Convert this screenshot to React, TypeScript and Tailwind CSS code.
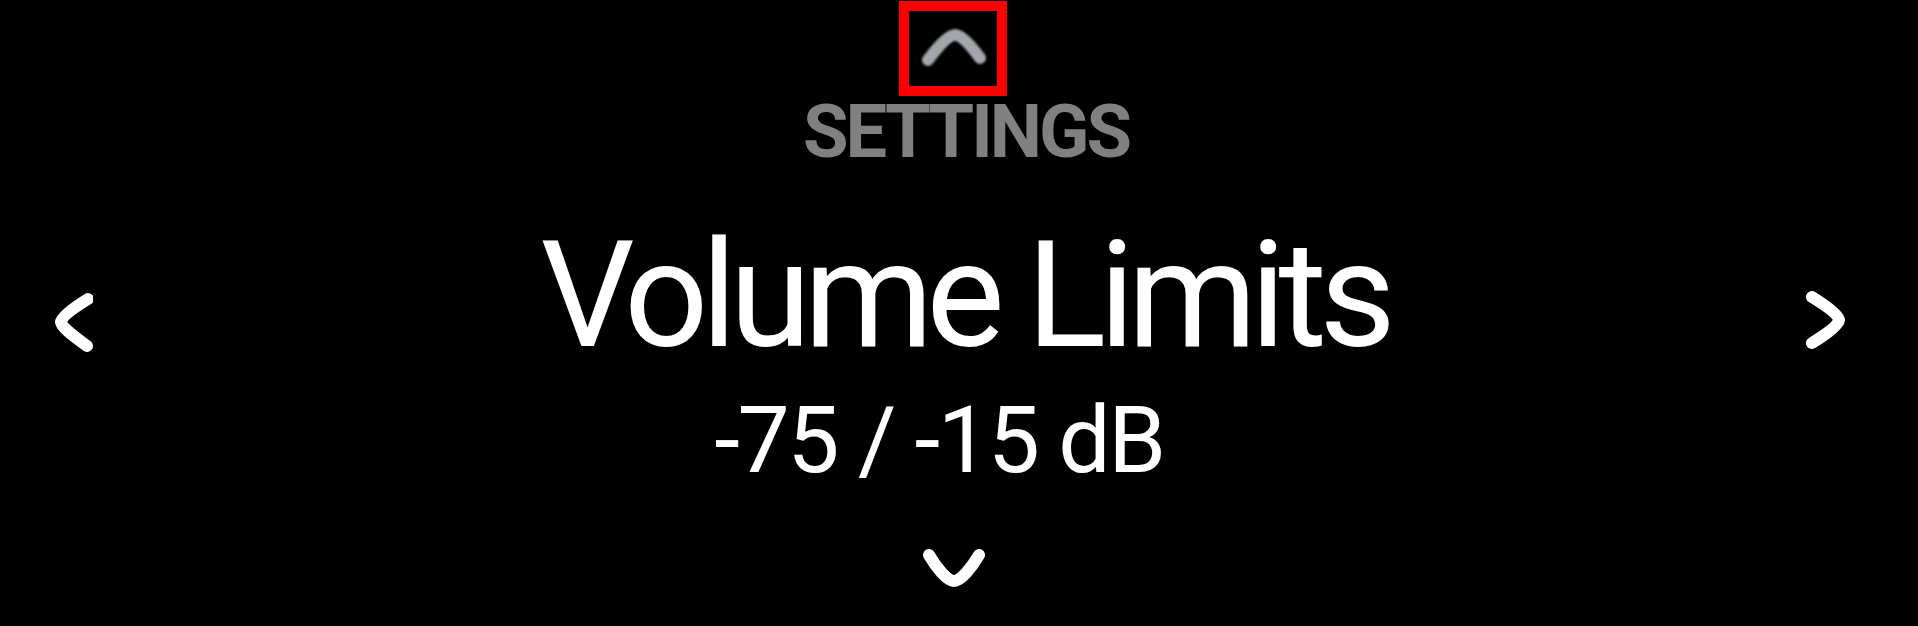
import type { ReactNode } from "react";

type ChevronProps = {
  width: number;
  height: number;
  d: string;
  color: string;
  className?: string;
};

function Chevron({ width, height, d, color, className }: ChevronProps) {
  return (
    <svg
      width={width}
      height={height}
      viewBox={`0 0 ${width} ${height}`}
      className={className}
      fill="none"
    >
      <path
        d={d}
        stroke={color}
        strokeWidth={12}
        strokeLinecap="round"
        strokeLinejoin="round"
      />
    </svg>
  );
}

function SideColumn({ children }: { children: ReactNode }) {
  return <div className="flex w-[120px] shrink-0 flex-col">{children}</div>;
}

export default function App() {
  return (
    <div
      className="flex h-[626px] w-[1918px] overflow-hidden bg-black text-white"
      style={{ fontFamily: "Roboto, 'Liberation Sans', sans-serif" }}
    >
      <SideColumn>
        <Chevron
          width={40}
          height={60}
          d="M35 7 C22 15, 9 24, 8 30 C9 36, 22 45, 34 54"
          color="#ffffff"
          className="ml-[53px] mt-[292px] blur-[0.7px]"
        />
      </SideColumn>

      <div className="flex flex-1 flex-col items-center">
        <div className="ml-[-12px] mt-[1px] flex h-[95px] w-[108px] items-start justify-start border-[10px] border-[#ff0000]">
          <Chevron
            width={88}
            height={75}
            d="M19 49 C28 37, 39 24, 46 24 C53 24, 63 36, 71 47"
            color="#a3a6aa"
            className="blur-[0.8px]"
          />
        </div>

        <div className="ml-[14px] mt-[-1px] text-[74px] font-bold leading-none tracking-[-3px] text-[#808080]">
          SETTINGS
        </div>

        <div className="ml-[11px] mt-[53px] text-[148px] font-normal leading-none tracking-[-7.4px]">
          Volume Limits
        </div>

        <div className="ml-[-40px] mt-[24px] text-[93px] font-normal leading-none tracking-[-2.4px]">
          -75 / -15 dB
        </div>

        <Chevron
          width={66}
          height={46}
          d="M8 8 C15 20, 26 34, 33 34 C40 34, 51 20, 58 8"
          color="#ffffff"
          className="ml-[-10px] mt-[60px] blur-[0.7px]"
        />
      </div>

      <SideColumn>
        <Chevron
          width={40}
          height={60}
          d="M7 7 C20 15, 33 24, 34 30 C33 36, 20 45, 7 53"
          color="#ffffff"
          className="ml-[7px] mt-[290px] blur-[0.7px]"
        />
      </SideColumn>
    </div>
  );
}
